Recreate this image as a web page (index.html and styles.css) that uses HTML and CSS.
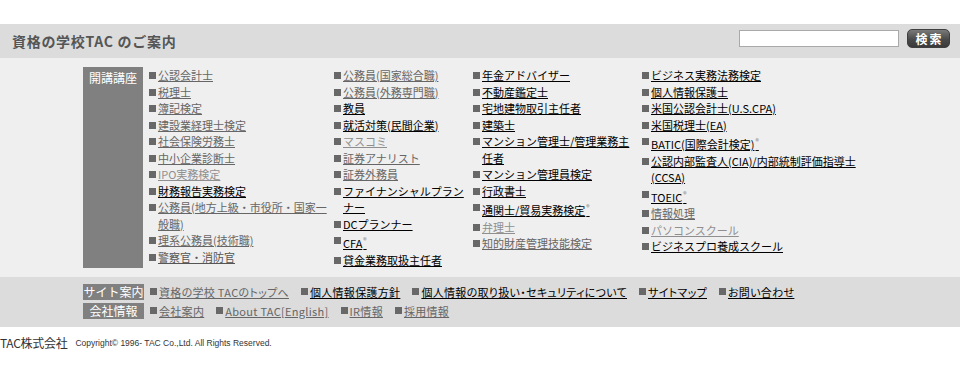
FILE: index.html
```html
<!DOCTYPE html>
<html lang="ja">
<head>
<meta charset="utf-8">
<title>資格の学校TAC のご案内</title>
<link rel="stylesheet" href="styles.css">
</head>
<body>
<header class="head">
  <h1 class="head-title">資格の学校TAC のご案内</h1>
  <form class="search">
    <input class="search-input" type="text" aria-label="検索">
    <button class="search-btn" type="button">検索</button>
  </form>
</header>

<section class="courses">
  <div class="label label-tall">開講講座</div>
  <ul class="col col1">
    <li><i></i><a class="gray">公認会計士</a></li>
    <li><i></i><a class="gray">税理士</a></li>
    <li><i></i><a class="gray">簿記検定</a></li>
    <li><i></i><a class="gray">建設業経理士検定</a></li>
    <li><i></i><a class="gray">社会保険労務士</a></li>
    <li><i></i><a class="gray">中小企業診断士</a></li>
    <li><i></i><a class="light">IPO実務検定</a></li>
    <li><i></i><a>財務報告実務検定</a></li>
    <li><i></i><a class="gray">公務員(地方上級・市役所・国家一般職)</a></li>
    <li><i></i><a class="gray">理系公務員(技術職)</a></li>
    <li><i></i><a class="dim">警察官・消防官</a></li>
  </ul>
  <ul class="col col2">
    <li><i></i><a class="gray">公務員(国家総合職)</a></li>
    <li><i></i><a class="gray">公務員(外務専門職)</a></li>
    <li><i></i><a>教員</a></li>
    <li><i></i><a>就活対策(民間企業)</a></li>
    <li><i></i><a class="light">マスコミ</a></li>
    <li><i></i><a class="gray">証券アナリスト</a></li>
    <li><i></i><a class="gray">証券外務員</a></li>
    <li><i></i><a>ファイナンシャルプランナー</a></li>
    <li><i></i><a>DCプランナー</a></li>
    <li class="tm"><i></i><a>CFA<sup>®</sup></a></li>
    <li><i></i><a>貸金業務取扱主任者</a></li>
  </ul>
  <ul class="col col3">
    <li><i></i><a>年金アドバイザー</a></li>
    <li><i></i><a>不動産鑑定士</a></li>
    <li><i></i><a>宅地建物取引主任者</a></li>
    <li><i></i><a>建築士</a></li>
    <li><i></i><a>マンション管理士/管理業務主任者</a></li>
    <li><i></i><a>マンション管理員検定</a></li>
    <li><i></i><a>行政書士</a></li>
    <li class="tm"><i></i><a>通関士/貿易実務検定<sup>®</sup></a></li>
    <li><i></i><a class="light">弁理士</a></li>
    <li><i></i><a class="gray">知的財産管理技能検定</a></li>
  </ul>
  <ul class="col col4">
    <li><i></i><a>ビジネス実務法務検定</a></li>
    <li><i></i><a>個人情報保護士</a></li>
    <li><i></i><a>米国公認会計士(U.S.CPA)</a></li>
    <li><i></i><a>米国税理士(EA)</a></li>
    <li class="tm"><i></i><a>BATIC(国際会計検定)<sup>®</sup></a></li>
    <li><i></i><a>公認内部監査人(CIA)/内部統制評価指導士(CCSA)</a></li>
    <li class="tm"><i></i><a>TOEIC<sup>®</sup></a></li>
    <li><i></i><a class="gray">情報処理</a></li>
    <li><i></i><a class="light">パソコンスクール</a></li>
    <li><i></i><a>ビジネスプロ養成スクール</a></li>
  </ul>
</section>

<footer class="foot">
  <div class="foot-row">
    <div class="label">サイト案内</div>
    <ul class="foot-links">
      <li><i></i><a class="gray">資格の学校 TACのトップへ</a></li>
      <li><i></i><a>個人情報保護方針</a></li>
      <li><i></i><a>個人情報の取り扱い・セキュリティについて</a></li>
      <li><i></i><a>サイトマップ</a></li>
      <li><i></i><a>お問い合わせ</a></li>
    </ul>
  </div>
  <div class="foot-row">
    <div class="label">会社情報</div>
    <ul class="foot-links">
      <li><i></i><a class="gray">会社案内</a></li>
      <li><i></i><a class="gray">About TAC[English]</a></li>
      <li><i></i><a class="gray">IR情報</a></li>
      <li><i></i><a class="gray">採用情報</a></li>
    </ul>
  </div>
</footer>

<p class="copyright"><span class="company">TAC株式会社</span><small class="copy-text">Copyright© 1996- TAC Co.,Ltd. All Rights Reserved.</small></p>
</body>
</html>
```

FILE: styles.css
```css
* { box-sizing: border-box; }

body {
  margin: 0;
  padding-top: 24px;
  background: #ffffff;
  font-family: "Noto Sans CJK JP", "Liberation Sans", sans-serif;
  color: #000;
}

ul { list-style: none; margin: 0; padding: 0; }

a {
  color: #000;
  text-decoration: underline;
  cursor: pointer;
}
a.gray { color: #666; }
a.dim { color: #555; }
a.light { color: #8f8f8f; }

sup {
  font-size: 7px;
  line-height: 0;
  color: #777;
  margin-left: 1px;
}

/* header */
.head {
  height: 34px;
  background: #dcdcdc;
  display: flex;
  justify-content: space-between;
  align-items: flex-start;
  padding: 0 10px 0 12px;
}
.head-title {
  margin: 0;
  font-size: 14px;
  line-height: 34px;
  font-weight: bold;
  color: #555;
  letter-spacing: 0.7px;
}
.search {
  margin: 5px 0 0;
  display: flex;
  align-items: center;
  gap: 8px;
}
.search-input {
  width: 160px;
  height: 17px;
  margin: 0;
  padding: 0 2px;
  border: 1px solid #a9a9a9;
  background: #fff;
}
.search-btn {
  width: 43px;
  height: 19px;
  margin: 0;
  padding: 0;
  border: 1px solid #3f3f3f;
  border-radius: 5px;
  background: linear-gradient(#7a7a7a, #4a4a4a 55%, #3a3a3a);
  color: #fff;
  font-family: "Noto Sans CJK JP", sans-serif;
  font-size: 12px;
  font-weight: bold;
  line-height: 17px;
  letter-spacing: 2px;
  text-indent: 2px;
}

/* labels */
.label {
  width: 61px;
  flex: 0 0 61px;
  background: #808080;
  color: #fff;
  font-size: 12px;
  line-height: 16px;
  text-align: center;
}
.label-tall {
  width: 60px;
  flex: 0 0 60px;
  padding-top: 3px;
  font-size: 12px;
}

/* courses */
.courses {
  background: #efefef;
  display: flex;
  align-items: stretch;
  padding: 9px 0 9px 83px;
  height: 219px;
}
.col {
  font-size: 11px;
  line-height: 16.5px;
}
.col li, .foot-links li {
  display: flex;
  align-items: flex-start;
}
.col li.tm a { padding-top: 3px; }
.col i, .foot-links i {
  flex: 0 0 7px;
  width: 7px;
  height: 7px;
  margin: 5px 2px 0 0;
  background: #686868;
}
.col1 { width: 185px; margin-left: 6px; }
.col2 { width: 139px; }
.col3 { width: 169px; padding-right: 12px; }
.col4 { width: 222px; }

/* footer */
.foot {
  background: #dcdcdc;
  height: 50px;
  padding: 7px 0 0 83px;
  display: flex;
  flex-direction: column;
  gap: 3px;
}
.foot-row {
  display: flex;
  align-items: center;
  gap: 6px;
}
.foot-links {
  display: flex;
  gap: 12px;
  font-size: 11px;
  line-height: 16px;
  font-feature-settings: "palt";
  letter-spacing: 0.3px;
}
.foot-links i { margin-top: 4px; }

/* copyright */
.copyright {
  margin: 8px 0 0;
  display: flex;
  align-items: center;
  gap: 8px;
  color: #333;
}
.company {
  font-size: 12px;
  line-height: 16px;
  letter-spacing: -0.3px;
}
.copy-text {
  font-family: "Liberation Sans", sans-serif;
  font-size: 8.5px;
}
```
